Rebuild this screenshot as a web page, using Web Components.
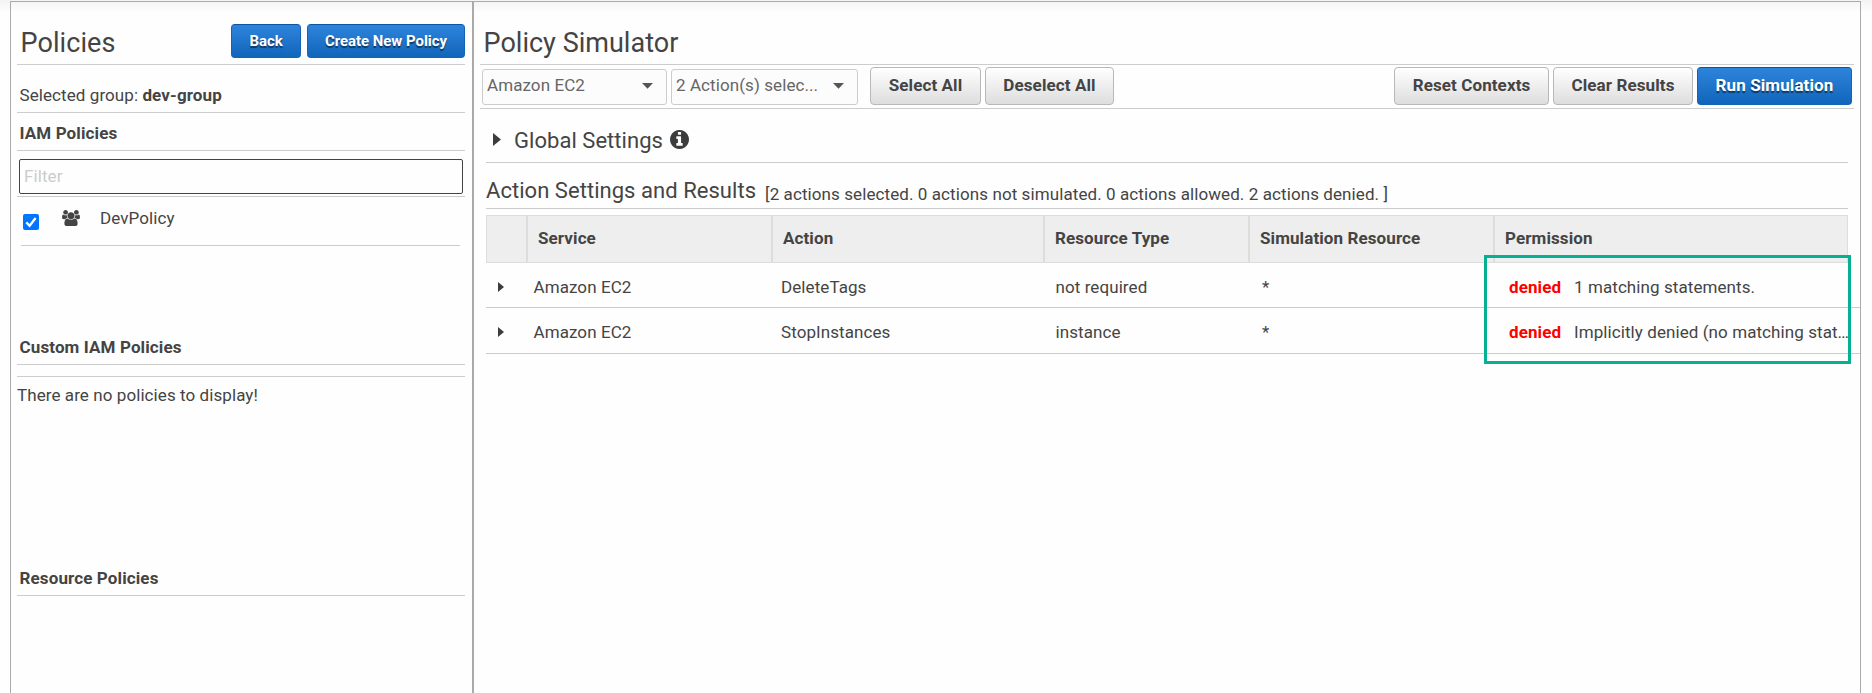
<!DOCTYPE html>
<html lang="en">
<head>
<meta charset="utf-8">
<title>IAM Policy Simulator</title>
<style>
html,body{margin:0;height:100%;overflow:hidden}
body{font:17px/20px Roboto,"Liberation Sans",sans-serif;letter-spacing:.08px;color:#444;background:linear-gradient(#f3f3f3,#fefefe 13px,#fefefe)}
</style>
</head>
<body>
<simulator-app></simulator-app>
<script>
const define=(name,html)=>customElements.define(name,class extends HTMLElement{
  connectedCallback(){
    if(this.shadowRoot)return;
    const t=document.createElement('template');t.innerHTML=html;
    this.attachShadow({mode:'open'}).append(t.content.cloneNode(true));
  }
});

define('ui-button',`<style>
:host{display:block;box-sizing:border-box;height:38px;border:1px solid #b8b8b8;border-radius:4px;background:linear-gradient(#fff,#ddd);font-weight:700;text-align:center;line-height:35px;white-space:nowrap;letter-spacing:.1px}
:host([primary]){color:#fff;border-color:#1563b5;border-top-color:#0c549f;background:linear-gradient(#2e84db,#1165bb);text-shadow:0 2px 1px rgba(0,0,0,.5)}
:host([small]){height:34px;font-size:14.900px;line-height:33px;letter-spacing:0}
</style><slot></slot>`);

define('ui-select',`<style>
:host{display:flex;box-sizing:border-box;height:36px;margin-top:2px;padding:5px 13px 0 4px;border:1px solid #ccc;border-radius:3px;background:#fcfcfc;color:#666;justify-content:space-between;white-space:nowrap}
svg{width:11px;height:6px;margin-top:8px;fill:#555}
</style><slot></slot><svg viewBox="0 0 11 6"><path d="M0 0h11L5.500 5.800z"/></svg>`);

define('section-row',`<style>
:host{display:flex;box-sizing:border-box;border-bottom:1px solid #ccc;align-items:flex-start;white-space:nowrap;flex:none}
</style><slot></slot>`);

define('disclosure-arrow',`<style>:host{display:block;width:6px;height:10px}svg{display:block;width:100%;height:100%;fill:#3c3c3c}</style>
<svg viewBox="0 0 7 10" preserveAspectRatio="none"><path d="M0 0L7 5L0 10z"/></svg>`);

define('group-icon',`<style>:host{display:block;width:18px;height:16px}svg{display:block;fill:#444}</style>
<svg width="18" height="16" viewBox="0 0 1920 1792" preserveAspectRatio="none"><path d="M593 896q-162 5-265 128H194q-82 0-138-40.500T0 865q0-353 124-353 6 0 43.500 21t97.500 42.500T384 597q67 0 133-23-5 37-5 66 0 139 81 256zm1071 637q0 120-73 189.500t-194 69.500H523q-121 0-194-69.500T256 1533q0-53 3.500-103.500t14-109T300 1212t43-97.500 62-81 85.500-53.500T602 960q10 0 43 21.500t73 48 107 48 135 21.500 135-21.500 107-48 73-48 43-21.500q61 0 111.500 20t85.500 53.500 62 81 43 97.500 26.500 108.500 14 109 3.500 103.500zM640 256q0 106-75 181t-181 75-181-75-75-181 75-181T384 0t181 75 75 181zm704 384q0 159-112.500 271.500T960 1024 688.500 911.500 576 640t112.500-271.500T960 256t271.500 112.500T1344 640zm576 225q0 78-56 118.500t-138 40.500h-134q-103-123-265-128 81-117 81-256 0-29-5-66 66 23 133 23 59 0 119-21.500t97.500-42.500 43.500-21q124 0 124 353zm-128-609q0 106-75 181t-181 75-181-75-75-181 75-181 181-75 181 75 75 181z"/></svg>`);

define('info-icon',`<style>:host{display:block;width:19px;height:19px}svg{display:block;fill:#3c3c3c}</style>
<svg width="19" height="19" viewBox="0 0 1536 1536"><path d="M1024 1248v-160q0-14-9-23t-23-9h-96V544q0-14-9-23t-23-9H544q-14 0-23 9t-9 23v160q0 14 9 23t23 9h96v320h-96q-14 0-23 9t-9 23v160q0 14 9 23t23 9h448q14 0 23-9t9-23zM896 352V192q0-14-9-23t-23-9H672q-14 0-23 9t-9 23v160q0 14 9 23t23 9h192q14 0 23-9t9-23zm640 416q0 209-103 385.500T1153.500 1433 768 1536t-385.500-103T103 1153.500 0 768t103-385.500T382.500 103 768 0t385.500 103T1433 382.500 1536 768z"/></svg>`);

define('check-box',`<style>:host{display:block;width:16px;height:16px;border-radius:2px;background:#0075ff}svg{display:block}</style>
<svg width="16" height="16"><path d="M3.300 8.400L6.600 11.700L12.600 4" fill="none" stroke="#fff" stroke-width="2.300"/></svg>`);

define('policies-panel',`<style>
:host{display:flex;flex-direction:column;box-sizing:border-box;width:461px;padding:0 7px 0 6px}
h1{margin:25px 0 0 3.500px;font-size:27px;line-height:32px;font-weight:400;flex:1}
h2{margin:0;font-size:17px;line-height:20px;font-weight:700;letter-spacing:.12px}
b{letter-spacing:.13px}
.btn{margin-top:22px}
input{all:unset;box-sizing:border-box;width:444px;height:35px;border:1px solid #444;border-radius:2px;padding:0 4px 2px;line-height:31px}
input::placeholder{color:#ccc;opacity:1}
</style>
<section-row style="height:63px"><h1>Policies</h1><ui-button class="btn" primary small style="width:70px;margin-right:6px">Back</ui-button><ui-button class="btn" primary small style="width:158px">Create New Policy</ui-button></section-row>
<section-row style="height:48px;padding:20px 0 0 2.500px"><span>Selected group: <b>dev-group</b></span></section-row>
<section-row style="height:38px;padding:10px 0 0 2.500px"><h2>IAM Policies</h2></section-row>
<section-row style="height:46px;padding:8px 0 0 2px"><input placeholder="Filter"></section-row>
<section-row style="height:49px;margin:0 5px 0 4px;padding:11px 0 0 2px"><check-box style="margin:6px 23px 0 0"></check-box><group-icon style="margin:2px 20px 0 0"></group-icon>DevPolicy</section-row>
<section-row style="height:119px;padding:91px 0 0 2.500px"><h2>Custom IAM Policies</h2></section-row>
<section-row style="height:12px"></section-row>
<section-row style="height:100px;padding-top:8px;border:0">There are no policies to display!</section-row>
<section-row style="height:119px;padding:91px 0 0 2.500px"><h2>Resource Policies</h2></section-row>`);

define('results-table',`<style>
:host{display:block}
.r{display:grid;grid-template-columns:41px 245px 272px 205px 245px 1fr;white-space:nowrap}
.h{box-sizing:border-box;height:48px;margin-right:12px;background:#eee;border:1px solid #ddd;font-weight:700;letter-spacing:.1px}
.h>*{padding:12px 0 0 10px;border-left:2px solid #ddd}
.h>:first-child{border:0}
.b{box-sizing:border-box;border-bottom:1px solid #ccc}
.p{display:flex}.p b{color:red;width:65px;letter-spacing:.1px}
</style>
<div class="r h" style="grid-template-columns:39px 245px 272px 205px 245px 1fr"><div></div><div>Service</div><div>Action</div><div>Resource Type</div><div>Simulation Resource</div><div>Permission</div></div>
<div class="r b" style="height:45px;padding-top:14px"><disclosure-arrow style="margin:5px 0 0 12px"></disclosure-arrow><div style="padding-left:6.500px">Amazon EC2</div><div style="padding-left:9px">DeleteTags</div><div style="padding-left:11.500px">not required</div><div style="padding-left:13px">*</div><div class="p" style="padding-left:15px"><b>denied</b><span>1 matching statements.</span></div></div>
<div class="r b" style="height:46px;padding-top:14px"><disclosure-arrow style="margin:5px 0 0 12px"></disclosure-arrow><div style="padding-left:6.500px">Amazon EC2</div><div style="padding-left:9px">StopInstances</div><div style="padding-left:11.500px">instance</div><div style="padding-left:13px">*</div><div class="p" style="padding-left:15px"><b>denied</b><span>Implicitly denied (no matching stat…</span></div></div>`);

define('simulator-panel',`<style>
:host{display:flex;flex-direction:column;box-sizing:border-box;flex:1;border-left:2px solid #aaa;padding-left:6px}
h1{margin:25px 0 0 3.500px;font-size:27px;line-height:32px;font-weight:400;letter-spacing:.02px}
h2{margin:0;font-size:22px;line-height:25px;font-weight:400;letter-spacing:.04px}
</style>
<section-row style="height:63px;margin-right:6px"><h1>Policy Simulator</h1></section-row>
<section-row style="height:44px;margin-right:6px;padding:2px 2px 0"><ui-select style="width:185px;margin-right:4px">Amazon EC2</ui-select><ui-select style="width:187px;margin-right:12px">2 Action(s) selec...</ui-select><ui-button style="width:111px;margin-right:4px">Select All</ui-button><ui-button style="width:129px;margin-right:auto">Deselect All</ui-button><ui-button style="width:155px;margin-right:4px">Reset Contexts</ui-button><ui-button style="width:140px;margin-right:4px">Clear Results</ui-button><ui-button primary style="width:155px">Run Simulation</ui-button></section-row>
<section-row style="height:54px;margin:0 12px 0 6px;padding:19px 0 0 7px"><disclosure-arrow style="width:8px;height:13px;margin:5px 13px 0 0"></disclosure-arrow><h2>Global Settings</h2><info-icon style="margin:2px 0 0 7px"></info-icon></section-row>
<section-row style="height:46px;margin:0 12px 6px 6px;padding-top:15px"><h2>Action Settings and Results</h2><span style="margin:6px 0 0 9px;letter-spacing:.09px">[2 actions selected. 0 actions not simulated. 0 actions allowed. 2 actions denied. ]</span></section-row>
<results-table style="margin-left:6px"></results-table>`);

define('highlight-box',`<style>:host{position:absolute;box-sizing:border-box;left:1484px;top:255px;width:367px;height:109px;border:3px solid #06b092}</style>`);

define('simulator-app',`<style>
:host{display:flex;box-sizing:border-box;margin:0 11px 0 10px;height:693px;padding-top:1px}
main{display:flex;flex:1;border:1px solid #aaa;border-bottom:0}
</style><main><policies-panel></policies-panel><simulator-panel></simulator-panel></main><highlight-box></highlight-box>`);
</script>
</body>
</html>
